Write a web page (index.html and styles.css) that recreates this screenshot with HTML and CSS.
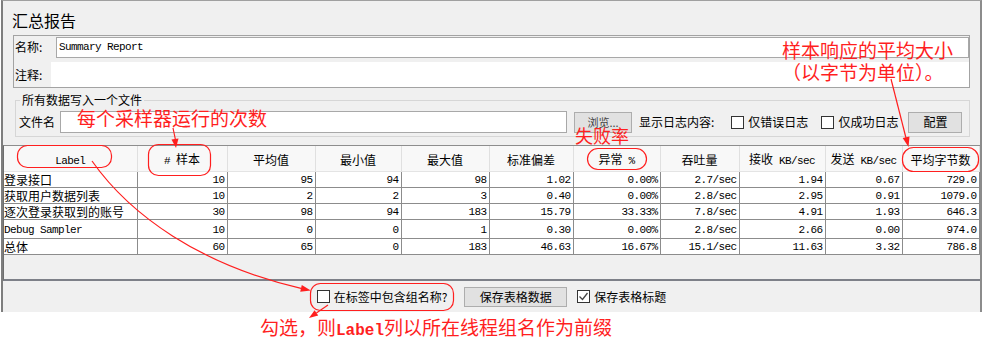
FILE: index.html
```html
<!DOCTYPE html>
<html lang="zh-CN">
<head>
  <meta charset="UTF-8">
  <title>汇总报告</title>
  <link rel="stylesheet" href="styles.css">
</head>
<body>

  <div class="panel">
    <div class="title">汇总报告</div>

    <div class="namebox">
      <div class="name-row">
        <span class="lbl">名称:</span>
        <div class="input mono">Summary Report</div>
      </div>
      <div class="comment-row">
        <span class="lbl">注释:</span>
        <div class="textarea"></div>
      </div>
    </div>

    <fieldset class="filegroup">
      <legend>所有数据写入一个文件</legend>
      <div class="file-row">
        <span class="file-lbl">文件名</span>
        <div class="input file-input"></div>
        <button class="btn btn-browse">浏览...</button>
        <span class="log-lbl">显示日志内容:</span>
        <span class="check"><span class="box"></span>仅错误日志</span>
        <span class="check check-gap"><span class="box"></span>仅成功日志</span>
        <button class="btn btn-config">配置</button>
      </div>
    </fieldset>

    <div class="table-wrap">
      <table class="report">
        <colgroup>
          <col style="width:133px"><col style="width:90px"><col style="width:88px"><col style="width:86px">
          <col style="width:88px"><col style="width:84px"><col style="width:87px"><col style="width:79px">
          <col style="width:86px"><col style="width:77px"><col style="width:77px">
        </colgroup>
        <thead>
          <tr>
            <th><span class="mono">Label</span></th>
            <th><span class="mono">#&nbsp;</span>样本</th>
            <th>平均值</th>
            <th>最小值</th>
            <th>最大值</th>
            <th>标准偏差</th>
            <th>异常<span class="mono">&nbsp;%</span></th>
            <th>吞吐量</th>
            <th>接收<span class="mono">&nbsp;KB/sec</span></th>
            <th>发送<span class="mono">&nbsp;KB/sec</span></th>
            <th>平均字节数</th>
          </tr>
        </thead>
        <tbody>
          <tr>
            <td class="name">登录接口</td>
            <td>10</td><td>95</td><td>94</td><td>98</td><td>1.02</td><td>0.00%</td><td>2.7/sec</td><td>1.94</td><td>0.67</td><td>729.0</td>
          </tr>
          <tr>
            <td class="name">获取用户数据列表</td>
            <td>10</td><td>2</td><td>2</td><td>3</td><td>0.40</td><td>0.00%</td><td>2.8/sec</td><td>2.95</td><td>0.91</td><td>1079.0</td>
          </tr>
          <tr>
            <td class="name">逐次登录获取到的账号</td>
            <td>30</td><td>98</td><td>94</td><td>183</td><td>15.79</td><td>33.33%</td><td>7.8/sec</td><td>4.91</td><td>1.93</td><td>646.3</td>
          </tr>
          <tr>
            <td class="name"><span class="mono">Debug Sampler</span></td>
            <td>10</td><td>0</td><td>0</td><td>1</td><td>0.30</td><td>0.00%</td><td>2.8/sec</td><td>2.66</td><td>0.00</td><td>974.0</td>
          </tr>
          <tr>
            <td class="name">总体</td>
            <td>60</td><td>65</td><td>0</td><td>183</td><td>46.63</td><td>16.67%</td><td>15.1/sec</td><td>11.63</td><td>3.32</td><td>786.8</td>
          </tr>
        </tbody>
      </table>
    </div>

    <div class="bottom-bar">
      <span class="check"><span class="box"></span>在标签中包含组名称?</span>
      <button class="btn btn-save">保存表格数据</button>
      <span class="check check-save">
        <span class="box">
          <svg width="11" height="11" viewBox="0 0 11 11"><polyline points="1.5,5.5 4.5,8.5 9.5,2" fill="none" stroke="#444" stroke-width="1.3"/></svg>
        </span>保存表格标题
      </span>
    </div>
  </div>

  <!-- 标注 -->
  <svg class="marks" width="984" height="346" viewBox="0 0 984 346">
    <g fill="none" stroke="#ff1f1f" stroke-width="1.2">
      <rect x="17.5" y="145.5" width="94" height="22" rx="10"/>
      <rect x="148.5" y="144.5" width="62" height="31" rx="10"/>
      <rect x="587.5" y="148.5" width="59" height="21" rx="10.5"/>
      <rect x="902.5" y="147.5" width="76" height="24" rx="11"/>
      <rect x="310.5" y="283.5" width="143" height="27" rx="10"/>
      <path d="M173 128 L175.5 140"/>
      <path d="M891 79 L906 138"/>
      <path d="M92 161 C130 215 200 265 301 288.3"/>
      <path d="M328 305 L316.4 312.9"/>
    </g>
    <g fill="#ff1f1f">
      <polygon points="176,148 171.5,139.5 178.5,138.5"/>
      <polygon points="908.5,147 902.7,138.1 909.5,136.4"/>
      <polygon points="310.8,290.5 300.2,291.7 301.8,284.9"/>
      <polygon points="309,318 318.2,315.5 314.6,310.3"/>
    </g>
  </svg>

  <div class="note note-count">每个采样器运行的次数</div>
  <div class="note note-fail">失败率</div>
  <div class="note note-size">样本响应的平均大小<br>（以字节为单位）。</div>
  <div class="note note-prefix">勾选，则<span class="note-mono">Label</span>列以所在线程组名作为前缀</div>

</body>
</html>
```

FILE: styles.css
```css
body {
  margin: 0;
  width: 984px;
  height: 346px;
  position: relative;
  overflow: hidden;
  background: #fff;
  color: #000;
  font-family: "Noto Sans CJK SC", "Noto Sans", sans-serif;
  font-size: 12px;
  line-height: 16px;
}

.mono {
  font-family: "Liberation Mono", monospace;
  font-size: 11px;
  letter-spacing: -0.6px;
}

.panel {
  width: 981px;
  height: 312px;
  box-sizing: border-box;
  margin-left: 1px;
  background: #f0f0f0;
  border-top: 1px solid #a0a0a0;
  border-left: 2px solid #7e7e7e;
  border-right: 2px solid #8c8c8c;
}

.title {
  padding: 9px 0 5px 9px;
  font-size: 16px;
  line-height: 20px;
}

/* 名称 / 注释 */
.namebox {
  margin: 0 10px;
  border: 1px solid #a3a3a3;
}

.name-row {
  display: flex;
  align-items: center;
  height: 22px;
  padding-left: 1px;
}

.name-row .lbl { width: 41px; }

.input {
  box-sizing: border-box;
  background: #fff;
  border: 1px solid #a8a8a8;
}

.name-row .input {
  flex: 1;
  height: 21px;
  margin-top: 1px;
  padding-left: 2px;
  line-height: 19px;
}

.comment-row {
  display: flex;
  align-items: center;
  height: 25px;
  margin-top: 4px;
  padding-left: 1px;
}

.comment-row .lbl { width: 36px; }

.textarea {
  flex: 1;
  height: 25px;
  background: #fff;
}

/* 文件 */
.filegroup {
  margin: 4px 10px 0 12px;
  padding: 3px 0 3px 3px;
  border: 1px solid #d6d6d6;
  min-width: 0;
}

.filegroup legend {
  margin-left: 1px;
  padding: 0 2px;
  line-height: 16px;
}

.file-row {
  display: flex;
  align-items: center;
  height: 22px;
}

.file-lbl { margin-right: 5px; }

.file-input {
  width: 507px;
  height: 22px;
}

.btn {
  box-sizing: border-box;
  padding: 0;
  margin: 0;
  background: #e1e1e1;
  border: 1px solid #adadad;
  color: #000;
  font-family: inherit;
  font-size: 12px;
  line-height: 16px;
}

.btn-browse {
  width: 58px;
  height: 21px;
  margin-left: 7px;
  font-size: 11px;
  color: #444;
}

.log-lbl { margin-left: 7px; margin-right: 17px; }

.check {
  display: flex;
  align-items: center;
}

.check .box {
  box-sizing: border-box;
  width: 13px;
  height: 13px;
  margin-right: 4px;
  background: #fff;
  border: 1px solid #333;
  display: flex;
  align-items: center;
  justify-content: center;
}

.check-gap { margin-left: 13px; }

.btn-config {
  width: 54px;
  height: 21px;
  margin-left: 10px;
}

/* 表格 */
.table-wrap {
  margin-top: 8px;
  height: 136px;
  box-sizing: border-box;
  border-top: 1px solid #8d8d8d;
  border-left: 1px solid #6e6e6e;
  border-bottom: 2px solid #7d8088;
}

.report {
  border-collapse: collapse;
  table-layout: fixed;
  width: 975px;
}

.report th {
  height: 23px;
  padding: 2px 0 0;
  background: #f8f8f8;
  border-right: 1px solid #e0e0e0;
  border-bottom: 1px solid #e4e4e4;
  font-weight: normal;
  white-space: nowrap;
}

.report td {
  height: 14px;
  padding: 1px 2px 0 1px;
  background: #fff;
  border: 1px solid #8c8c8c;
  text-align: right;
  white-space: nowrap;
  overflow: hidden;
  font-family: "Liberation Mono", monospace;
  font-size: 11px;
  letter-spacing: -0.6px;
  line-height: 14px;
}

.report td:first-child { border-left: none; }

.report td.name {
  text-align: left;
  padding: 0;
  font-family: "Noto Sans CJK SC", "Noto Sans", sans-serif;
  font-size: 12px;
  letter-spacing: 0;
  line-height: 15px;
}

/* 底部 */
.bottom-bar {
  display: flex;
  justify-content: center;
  align-items: center;
  height: 31px;
}

.btn-save {
  width: 103px;
  height: 20px;
  margin-left: 17px;
}

.check-save { margin-left: 10px; }

/* 红色标注 */
.marks {
  position: absolute;
  left: 0;
  top: 0;
  pointer-events: none;
}

.note {
  position: absolute;
  color: #ff1f1f;
  font-size: 19px;
  line-height: 19px;
  white-space: nowrap;
}

.note-count { left: 77px; top: 108px; }

.note-fail { left: 575px; top: 126px; font-size: 18px; }

.note-size { left: 782px; top: 39px; line-height: 22px; }

.note-prefix { left: 260px; top: 317px; }

.note-mono {
  font-family: "Liberation Mono", monospace;
  font-weight: bold;
  font-size: 16px;
}
```
